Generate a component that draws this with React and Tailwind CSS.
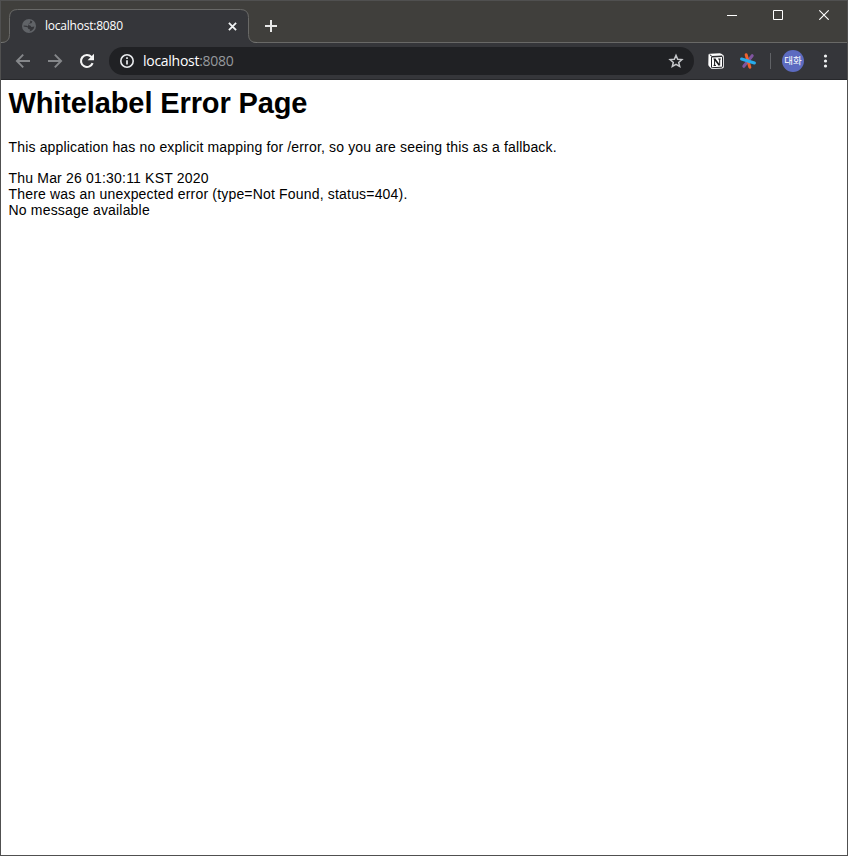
import React from "react";

function TabStrip() {
  return (
    <header className="relative flex h-[41px] shrink-0 bg-[#403f3c]">
      <svg className="absolute -left-px -top-px h-[43px] w-[848px]" viewBox="0 0 848 43" fill="none">
        <path d="M0 42.5H1.5Q9.5 42.5 9.5 34.5V17.5Q9.5 9.5 17.5 9.5H240.5Q248.5 9.5 248.5 17.5V34.5Q248.5 42.5 256.5 42.5H848V43H0Z" fill="#35363a" />
        <path d="M0 42.5H1.5Q9.5 42.5 9.5 34.5V17.5Q9.5 9.5 17.5 9.5H240.5Q248.5 9.5 248.5 17.5V34.5Q248.5 42.5 256.5 42.5H848" stroke="#696967" />
        <path d="M0 .5H848" stroke="#505050" />
      </svg>
      <div className="relative mt-[9px] flex h-[32px] w-[248px] items-center pl-[21px] pr-[12px]">
        <svg className="size-[14px]" viewBox="0 0 14 14">
          <circle cx="7" cy="7" r="7" fill="#606367" />
          <path d="M8.2 1.6L10.4 2.4L9.4 4.2L7.2 4.4L6.6 6.1L8.6 6.7L9.4 7.9L12.4 7.4L11.8 9.6L9.9 11.6L7.4 12.5L8.4 10.8L6.2 9.8L5.6 8.2L1.6 7.6L1.7 6.4L4.8 6.8L6 7.4L6.2 6.2L7 4.2L8.2 3.4Z" fill="#35363a" />
        </svg>
        <span className="ml-[9px] w-[82px] whitespace-nowrap font-['Open_Sans','Noto_Sans',sans-serif] text-[12px] leading-4 tracking-[-0.22px] text-white">localhost:8080</span>
        <svg className="ml-auto size-[9px]" viewBox="0 0 9 9" stroke="#f1f3f4" strokeWidth="1.8">
          <path d="M.9 .9L8.1 8.1M8.1 .9L.9 8.1" />
        </svg>
      </div>
      <svg className="relative ml-[16px] mt-[19px] size-[12px]" viewBox="0 0 12 12" stroke="#e8e8e8" strokeWidth="2">
        <path d="M6 0V12M0 6H12" />
      </svg>
      <div className="relative ml-auto mr-[18px] mt-[8px] flex h-[11px] gap-[36px]">
        <svg className="h-[11px] w-[10px]" viewBox="0 0 10 11" stroke="#fff"><path d="M0 6.5H10" /></svg>
        <svg className="h-[11px] w-[10px]" viewBox="0 0 10 11" fill="none" stroke="#fff"><path d="M.5 1.5H9.5V10.5H.5Z" /></svg>
        <svg className="h-[11px] w-[10px]" viewBox="0 0 10 11" stroke="#fff" strokeWidth="1.2"><path d="M.3 1.3L9.7 10.7M9.7 1.3L.3 10.7" /></svg>
      </div>
    </header>
  );
}

function NotionIcon() {
  return (
    <svg className="size-[16px]" viewBox="0 0 16 16">
      <path d="M.5 1.8Q.6.8 2 .7L11.6.2Q12.6.2 13.3.7L15.1 2.1Q15.8 2.6 15.8 3.5V14Q15.8 15.4 14.3 15.5L4.4 15.9Q3.5 15.9 2.9 15.2L.8 12.9Q.3 12.2.3 11.4Z" fill="#fff" />
      <path d="M1.8 1.7L4.1 3.5L14.2 3M3.5 4.1V14.1Q3.5 14.7 4.2 14.7L14 14.2Q14.5 14.1 14.5 13.5V4.1Q14.5 3.5 13.9 3.5L4.2 4Q3.5 4.1 3.5 4.1Z" fill="none" stroke="#242529" strokeWidth="1" />
      <path d="M5.5 6H7.6M6.6 6V12.4M5.5 12.4H8M10.2 6H12.8M11.7 6V12.4" fill="none" stroke="#161719" strokeWidth="1" />
      <path d="M6.8 6.2L11.3 12.3" stroke="#161719" strokeWidth="1.7" />
    </svg>
  );
}

function AsteriskIcon() {
  return (
    <svg className="size-[16px]" viewBox="0 0 16 16" strokeWidth="3" strokeLinecap="round">
      <path d="M12.2 2.7L3.8 13.3" stroke="#8055a0" />
      <path d="M6.2 1.8L9.8 14.2" stroke="#ef622d" />
      <path d="M1.6 6L14.4 10" stroke="#27acec" />
    </svg>
  );
}

function Toolbar() {
  return (
    <nav className="relative mt-px flex h-[37px] shrink-0 items-center border-b border-[#27282b] bg-[#35363a] pl-[13px]">
      <div className="flex w-[95px] gap-[14px] text-[#85878a]">
        <svg className="size-[18px]" viewBox="0 0 18 18" fill="none" stroke="currentColor" strokeWidth="1.9"><path d="M16 9H3M9.2 2.7L2.9 9L9.2 15.3" /></svg>
        <svg className="size-[18px]" viewBox="0 0 18 18" fill="none" stroke="currentColor" strokeWidth="1.9"><path d="M2 9H15M8.8 2.7L15.1 9L8.8 15.3" /></svg>
        <svg className="size-[18px] text-[#f5f5f5]" viewBox="0 0 18 18">
          <path d="M14.6 11.1A6 6 0 1 1 13.4 4.9L14.2 5.8" fill="none" stroke="currentColor" strokeWidth="2.1" />
          <path d="M16 1.8V8.2H9.6Z" fill="currentColor" />
        </svg>
      </div>
      <div className="flex h-[28px] w-[585px] items-center rounded-full bg-[#202124] pl-[11px] pr-[10px]">
        <svg className="size-[14px] text-[#e8eaed]" viewBox="0 0 14 14">
          <circle cx="7" cy="7" r="6.2" fill="none" stroke="currentColor" strokeWidth="1.6" />
          <path d="M7 6.2V10.4M7 3.3V4.9" stroke="currentColor" strokeWidth="1.7" />
        </svg>
        <span className="ml-[9px] whitespace-nowrap font-['Open_Sans','Noto_Sans',sans-serif] text-[14px] leading-5 tracking-[-0.28px] text-white">localhost<span className="text-[#96999d]">:8080</span></span>
        <svg className="ml-auto size-[16px] text-[#c5c7ca]" viewBox="0 0 16 16" fill="none" stroke="currentColor" strokeWidth="1.5">
          <path d="M8 2.4L9.7 6.2L13.9 6.6L10.7 9.4L11.7 13.5L8 11.3L4.3 13.5L5.3 9.4L2.1 6.6L6.3 6.2Z" />
        </svg>
      </div>
      <div className="ml-[14px] flex items-center">
        <NotionIcon />
        <span className="ml-[16px] flex"><AsteriskIcon /></span>
        <span className="ml-[14px] h-[16px] w-px bg-[#606266]" />
        <span className="ml-[11px] flex size-[22px] items-center justify-center rounded-full bg-[#5c6bc0] pb-px font-['Noto_Sans_CJK_KR',sans-serif] text-[9.5px] leading-none text-white">대화</span>
        <svg className="ml-[12px] h-[14px] w-[19px]" viewBox="0 0 19 14" fill="#f1f3f4">
          <circle cx="9.5" cy="2" r="1.6" /><circle cx="9.5" cy="7" r="1.6" /><circle cx="9.5" cy="12" r="1.6" />
        </svg>
      </div>
    </nav>
  );
}

export default function App() {
  return (
    <div className="flex h-[856px] w-[848px] flex-col overflow-hidden border border-[#505050] bg-white">
      <TabStrip />
      <Toolbar />
      <main className="px-[7.5px] pt-[6px] font-['Liberation_Sans',Arial,sans-serif] text-[14px] leading-4 text-black">
        <h1 className="whitespace-nowrap text-[29px] font-bold leading-[34px] tracking-[-0.12px]">Whitelabel Error Page</h1>
        <p className="mt-[19px] whitespace-nowrap tracking-[0.16px]">This application has no explicit mapping for /error, so you are seeing this as a fallback.</p>
        <div className="mt-[15px] tracking-[0.19px]">Thu Mar 26 01:30:11 KST 2020</div>
        <div className="tracking-[0.18px]">There was an unexpected error (type=Not Found, status=404).</div>
        <div className="tracking-[0.18px]">No message available</div>
      </main>
    </div>
  );
}
